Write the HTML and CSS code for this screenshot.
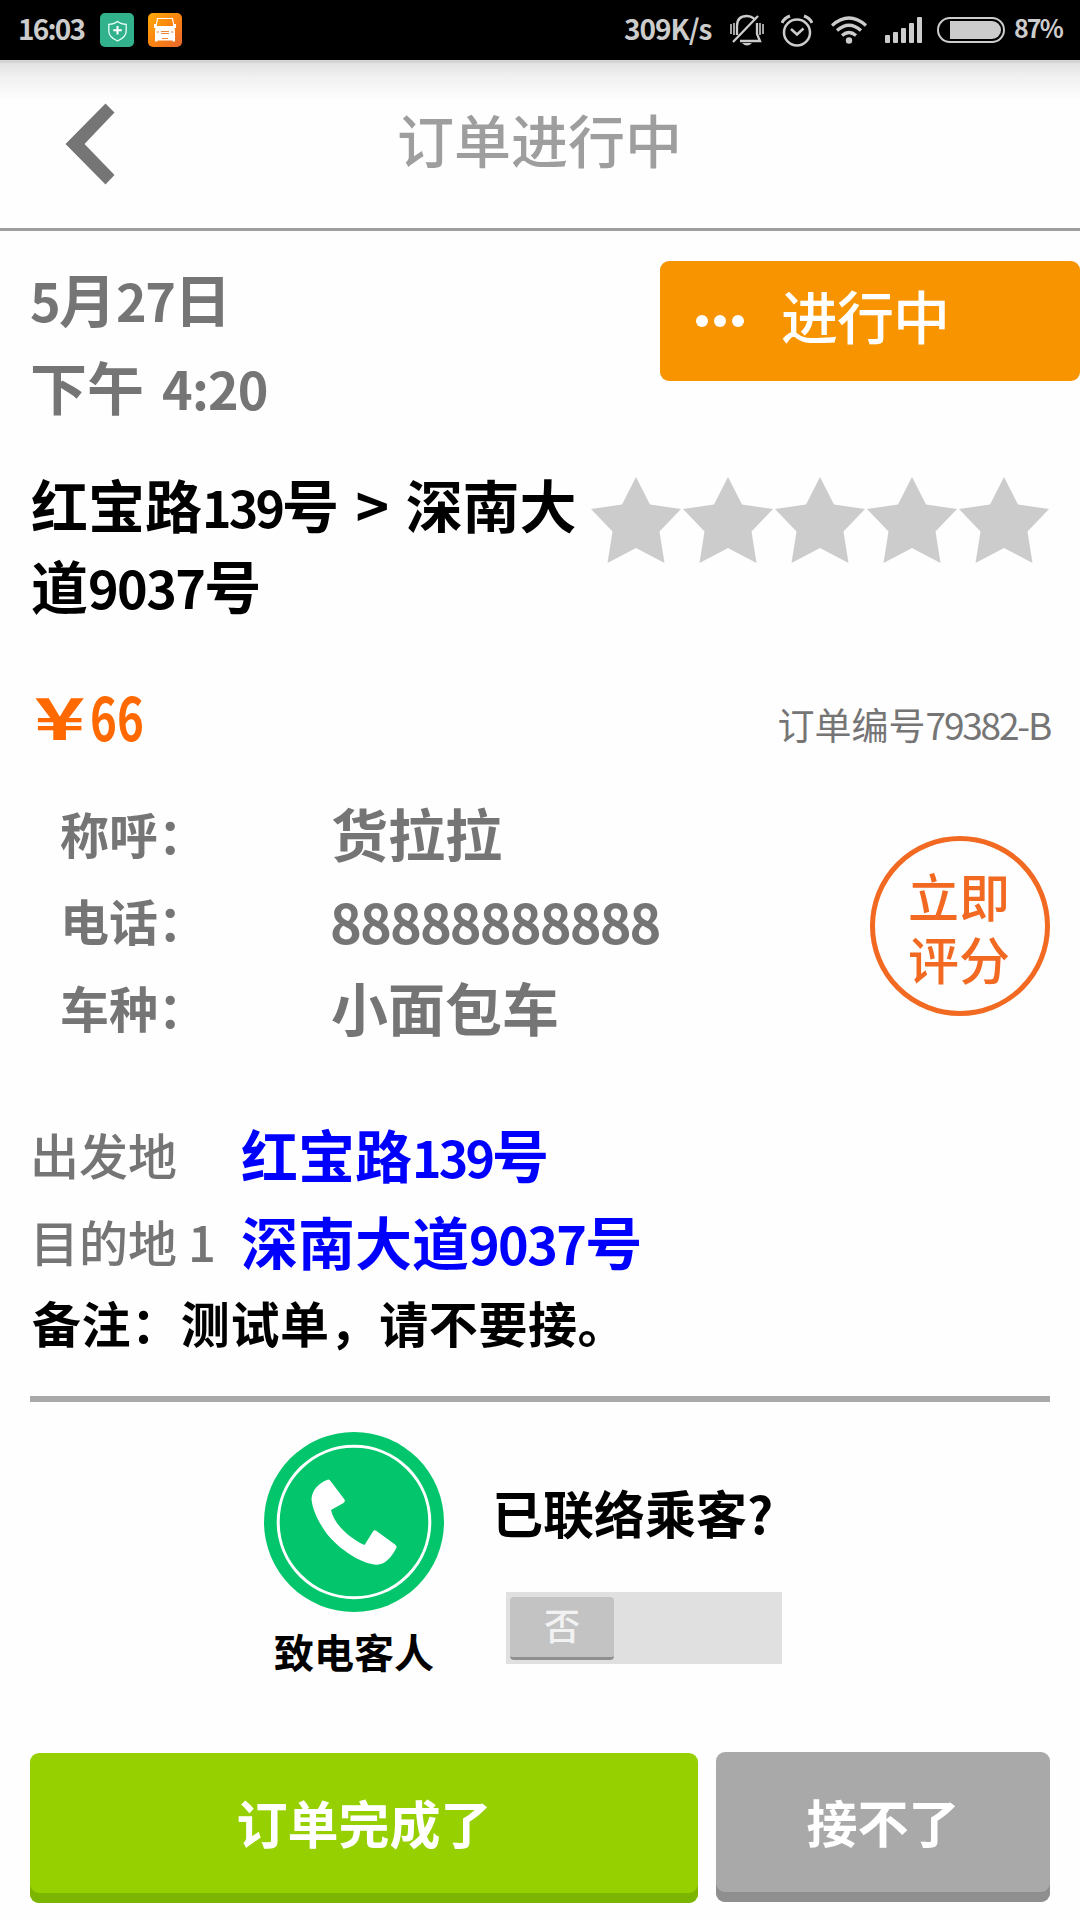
FILE: index.html
```html
<!DOCTYPE html>
<html lang="zh-CN">
<head>
<meta charset="utf-8">
<title>订单进行中</title>
<link rel="stylesheet" href="styles.css">
</head>
<body>
<div class="statusbar">
  <div class="status-left">
    <span class="clock">16:03</span>
    <svg class="app-icon" viewBox="0 0 34 34">
      <rect width="34" height="34" rx="5" fill="#32b28c"/>
      <path d="M17.500 8.500C15 10.500 12 11.300 8.800 11.300V18C8.800 23 13 26 17.500 28C22 26 26.200 23 26.200 18V11.300C23 11.300 20 10.500 17.500 8.500Z" fill="none" stroke="#e6fff6" stroke-width="1.300"/>
      <path d="M17.500 13V21.500M13.200 17.200H21.800" stroke="#fff" stroke-width="2"/>
    </svg>
    <svg class="app-icon second" viewBox="0 0 34 34">
      <defs><linearGradient id="truck" x1="0" y1="0" x2="1" y2="1"><stop offset="0" stop-color="#ffaa08"/><stop offset=".5" stop-color="#fa8410"/><stop offset="1" stop-color="#e8672e"/></linearGradient></defs>
      <rect width="34" height="34" rx="5" fill="url(#truck)"/>
      <path d="M9.500 5.500H24.500L26 13.500H8Z" fill="none" stroke="#fff" stroke-width="1.200"/>
      <path d="M6 11H8.500V14H25.500V11H28V15H26.500L27 18V28.500H24.500V27.500H9.500V28.500H7V18L7.500 15H6Z" fill="#fff"/>
      <path d="M8.500 19H11M23 19H25.500M13 18.500H21M13 20.500H21M14 25.500H20" stroke="#ee8535" stroke-width="1.100"/>
    </svg>
  </div>
  <div class="status-right">
    <span class="speed">309K/s</span>
    <svg class="bell" width="34" height="33" viewBox="0 0 34 33" fill="none" stroke="#ccc" stroke-width="2.300">
      <path d="M3 28L28 2M7 21V12C7 5 11 2 17 2C20 2 22 3 24 4.500M27 9V20L30 27H10"/>
      <path d="M1 10V20M4 9V21M30 9V21M33 10V20" stroke-width="1.600"/>
      <path d="M12 29H22Q17 34 12 29Z" fill="#ccc" stroke="none"/>
    </svg>
    <svg class="alarm" width="32" height="33" viewBox="0 0 32 33" fill="none" stroke="#ccc" stroke-width="2.500">
      <circle cx="16" cy="18.500" r="13"/><path d="M10 15L16 20.500L22.500 14.500"/><path d="M1 9Q3 4 9 2M31 9Q29 4 23 2" stroke-width="3"/>
    </svg>
    <svg class="wifi" width="36" height="28" viewBox="0 0 36 28" fill="none" stroke="#ccc" stroke-width="3.200">
      <path d="M1 9.500Q18-5.500 35 9.500M6 14.500Q18 4 30 14.500M11 19.500Q18 13.500 25 19.500"/><circle cx="18" cy="24.500" r="3.200" fill="#ccc" stroke="none"/>
    </svg>
    <svg class="signal" width="38" height="26" viewBox="0 0 38 26" fill="#ccc">
      <rect x="0" y="18" width="5" height="8" rx="1"/><rect x="8" y="15" width="5" height="11" rx="1"/><rect x="16" y="11" width="5" height="15" rx="1"/><rect x="24" y="6" width="5" height="20" rx="1"/><rect x="32" y="0" width="5" height="26" rx="1"/>
    </svg>
    <svg class="battery" width="68" height="26" viewBox="0 0 68 26">
      <rect x="1" y="1" width="66" height="24" rx="12" fill="none" stroke="#ccc" stroke-width="2"/>
      <path d="M13 4H55A9 9 0 0 1 55 22H13Z" fill="#ccc"/>
    </svg>
    <span class="percent">87%</span>
  </div>
</div>

<header class="header">
  <svg class="back" width="50" height="82" viewBox="0 0 50 82"><path d="M.5 41L40.500 .5L49.500 9.500L19.500 41L49.500 72L40.500 81.500Z" fill="#757575"/></svg>
  <h1 class="title">订单进行中</h1>
</header>

<main class="content">
  <section class="top">
    <div class="when">
      <div class="date"><span class="num">5</span>月<span class="num">27</span>日</div>
      <div class="time">下午<span class="num clocktime">4:20</span></div>
    </div>
    <div class="state">
      <svg width="48" height="14" viewBox="0 0 48 14" fill="#fff"><circle cx="6" cy="7" r="6"/><circle cx="24" cy="7" r="6"/><circle cx="42" cy="7" r="6"/></svg>
      <span>进行中</span>
    </div>
  </section>

  <section class="route">
    <div class="route-text">红宝路<span class="num narrow">139</span>号<span class="arrow"> &gt; </span>深南大道<span class="num">9037</span>号</div>
    <svg class="stars" width="460" height="88" viewBox="0 0 460 88" fill="#ccc">
      <defs><path id="star" d="M46 1L60 28.500L91 33L69.500 55.500L74.500 87L46 72L17.500 87L22.500 55.500L1 33L32 28.500Z"/></defs>
      <use href="#star"/><use href="#star" x="92"/><use href="#star" x="184"/><use href="#star" x="276"/><use href="#star" x="368"/>
    </svg>
  </section>

  <section class="price-row">
    <div class="price"><span class="yen">¥</span><span class="amount">66</span></div>
    <div class="order-no">订单编号<span class="code">79382-B</span></div>
  </section>

  <section class="customer">
    <dl class="info">
      <dt>称呼：</dt><dd>货拉拉</dd>
      <dt>电话：</dt><dd class="phone">88888888888</dd>
      <dt>车种：</dt><dd>小面包车</dd>
    </dl>
    <div class="rate"><span>立即</span><span>评分</span></div>
  </section>

  <section class="places">
    <div class="place"><span class="label">出发地</span><span class="address">红宝路<span class="num narrow">139</span>号</span></div>
    <div class="place"><span class="label">目的地 1</span><span class="address">深南大道<span class="num">9037</span>号</span></div>
    <div class="note">备注：测试单，请不要接。</div>
  </section>

  <section class="contact">
    <div class="call">
      <svg width="180" height="180" viewBox="0 0 180 180">
        <circle cx="90" cy="90" r="90" fill="#03c66c"/>
        <circle cx="90" cy="90" r="75.800" fill="none" stroke="#fff" stroke-width="3"/>
        <path d="M63 48Q65 46.500 66.500 49L80.500 67.500Q81.500 69.500 79.500 71L67 78C70 92 85 106 100.500 113L109 99.500Q110.500 97.500 112.500 99L131 112.500Q133.500 114.500 132 116.500C127 126 121 132.500 113 132.700C97 132 75 117 63 102C54 90 48 76 47.500 67C48 58 55 51 63 48Z" fill="#fff"/>
      </svg>
      <span>致电客人</span>
    </div>
    <div class="confirm">
      <div class="question">已联络乘客?</div>
      <div class="switch"><div class="knob">否</div></div>
    </div>
  </section>

  <section class="actions">
    <div class="button done">订单完成了</div>
    <div class="button reject">接不了</div>
  </section>
</main>
</body>
</html>
```

FILE: styles.css
```css
* { box-sizing: border-box; }
body {
  margin: 0;
  width: 1080px;
  height: 1920px;
  overflow: hidden;
  background: #fefefe;
  color: #000;
  font-family: "Noto Sans CJK SC", "Noto Sans", sans-serif;
  font-size: 57px;
  white-space: nowrap;
}
svg { display: block; flex: none; }

.statusbar {
  display: flex;
  justify-content: space-between;
  height: 60px;
  padding: 0 18px;
  background: #000;
  color: #ccc;
  font-size: 28px;
  font-weight: bold;
  line-height: 54px;
}
.status-left, .status-right { display: flex; align-items: center; height: 60px; }
.clock { width: 82px; height: 58px; letter-spacing: -1.8px; }
.app-icon { width: 34px; height: 34px; }
.second { margin-left: 14px; }
.speed { width: 106px; height: 58px; letter-spacing: -1px; }
.alarm { margin-left: 17px; }
.wifi { margin-left: 18px; }
.signal { margin-left: 18px; }
.battery { margin-left: 14px; }
.percent { width: 48px; height: 60px; margin-left: 9px; font-size: 25px; letter-spacing: -1.9px; }

.header {
  display: flex;
  align-items: center;
  height: 171px;
  padding: 0 65px;
  border-bottom: 3px solid #9e9e9e;
  background: linear-gradient(#d4d4d4 0 3px, #e2e2e2 3px, #f0f0f0 16px, #fefefe 40px);
}
.title {
  flex: 1;
  height: 84px;
  margin: 0 50px 0 0;
  padding-right: 1px;
  color: #9e9e9e;
  font-size: 57px;
  font-weight: 500;
  line-height: 72px;
  text-align: center;
}

.content { display: flex; flex-direction: column; padding-left: 30px; }
.num { font-size: 52px; letter-spacing: -1.6px; line-height: 1; }
.narrow { font-size: 50px; letter-spacing: -2.8px; }

.top { display: flex; justify-content: space-between; height: 222px; padding-top: 22px; }
.when { color: #757575; font-weight: bold; line-height: 88px; }
.clocktime { margin-left: 18px; letter-spacing: -.8px; }
.state {
  display: flex;
  align-items: center;
  gap: 37px;
  width: 420px;
  height: 120px;
  margin-top: 8px;
  padding-left: 36px;
  border-radius: 9px;
  background: #f79400;
  color: #fff;
  font-weight: 500;
}
.state span { line-height: 100px; height: 114px; letter-spacing: -1px; }

.route { display: flex; align-items: flex-start; height: 215px; padding-top: 10px; }
.route-text {
  width: 560px;
  padding-left: 1px;
  font-weight: bold;
  line-height: 81px;
  white-space: normal;
  word-break: break-all;
}
.arrow { word-spacing: 3.5px; }
.stars { margin-top: 13px; }

.price-row {
  display: flex;
  justify-content: space-between;
  height: 120px;
  padding-right: 30px;
  color: #757575;
  line-height: 100px;
}
.price { display: flex; padding-left: 4px; color: #ff6900; font-weight: bold; line-height: 94px; }
.yen { width: 56px; transform: scaleX(1.5); transform-origin: left; font-size: 58px; }
.amount { transform: scaleX(.76); transform-origin: left; font-size: 60px; }
.order-no { font-size: 37px; padding-top: 6px; }
.code { letter-spacing: -2.2px; }

.customer { display: flex; justify-content: space-between; height: 322px; padding: 0 30px; color: #757575; }
.info {
  display: grid;
  grid-template-columns: 271px auto;
  grid-auto-rows: 87px;
  margin: 0;
  padding-top: 1px;
  font-weight: bold;
  line-height: 87px;
}
.info dt { font-size: 49px; }
.info dd { margin: 0; }
.info .phone { margin-left: -1px; padding-top: 1px; font-size: 54px; letter-spacing: -1.9px; }
.rate {
  display: flex;
  flex-direction: column;
  align-items: center;
  width: 180px;
  height: 180px;
  margin-top: 48px;
  padding: 23px 2px 0 0;
  border: 5px solid #f26922;
  border-radius: 50%;
  color: #f26922;
  font-size: 51px;
  font-weight: 500;
  line-height: 63px;
}

.places { height: 292px; margin-right: 30px; border-bottom: 6px solid #a9a9a9; }
.place { display: flex; height: 87px; line-height: 87px; }
.label { width: 211px; color: #757575; font-size: 49px; font-weight: 500; }
.address { color: #00f; font-weight: bold; }
.note { padding-left: 2px; font-size: 49px; font-weight: bold; letter-spacing: .6px; line-height: 76px; }

.contact { display: flex; height: 350px; padding: 30px 0 0 234px; font-weight: bold; }
.call { display: flex; flex-direction: column; align-items: center; width: 180px; font-size: 40px; line-height: 78px; }
.confirm { width: 290px; margin-left: 48px; }
.question { padding-top: 42px; font-size: 51px; line-height: 76px; }
.switch { width: 276px; height: 72px; margin: 42px 0 0 14px; padding: 5px 4px; background: #e0e0e0; }
.knob {
  width: 104px;
  height: 63px;
  border-radius: 4px;
  border-bottom: 3px solid #909090;
  background: #c3c3c3;
  color: #f2f2f2;
  font-size: 36px;
  font-weight: 500;
  line-height: 54px;
  text-align: center;
}

.actions { display: flex; gap: 18px; color: #fff; font-size: 51px; font-weight: bold; }
.button { height: 150px; border-radius: 9px; line-height: 139px; text-align: center; }
.done { width: 668px; margin-top: 1px; background: #96d000; box-shadow: inset 0 -10px #7cb500; }
.reject { width: 334px; background: #a9a9a9; box-shadow: inset 0 -10px #8f8f8f; }
```
